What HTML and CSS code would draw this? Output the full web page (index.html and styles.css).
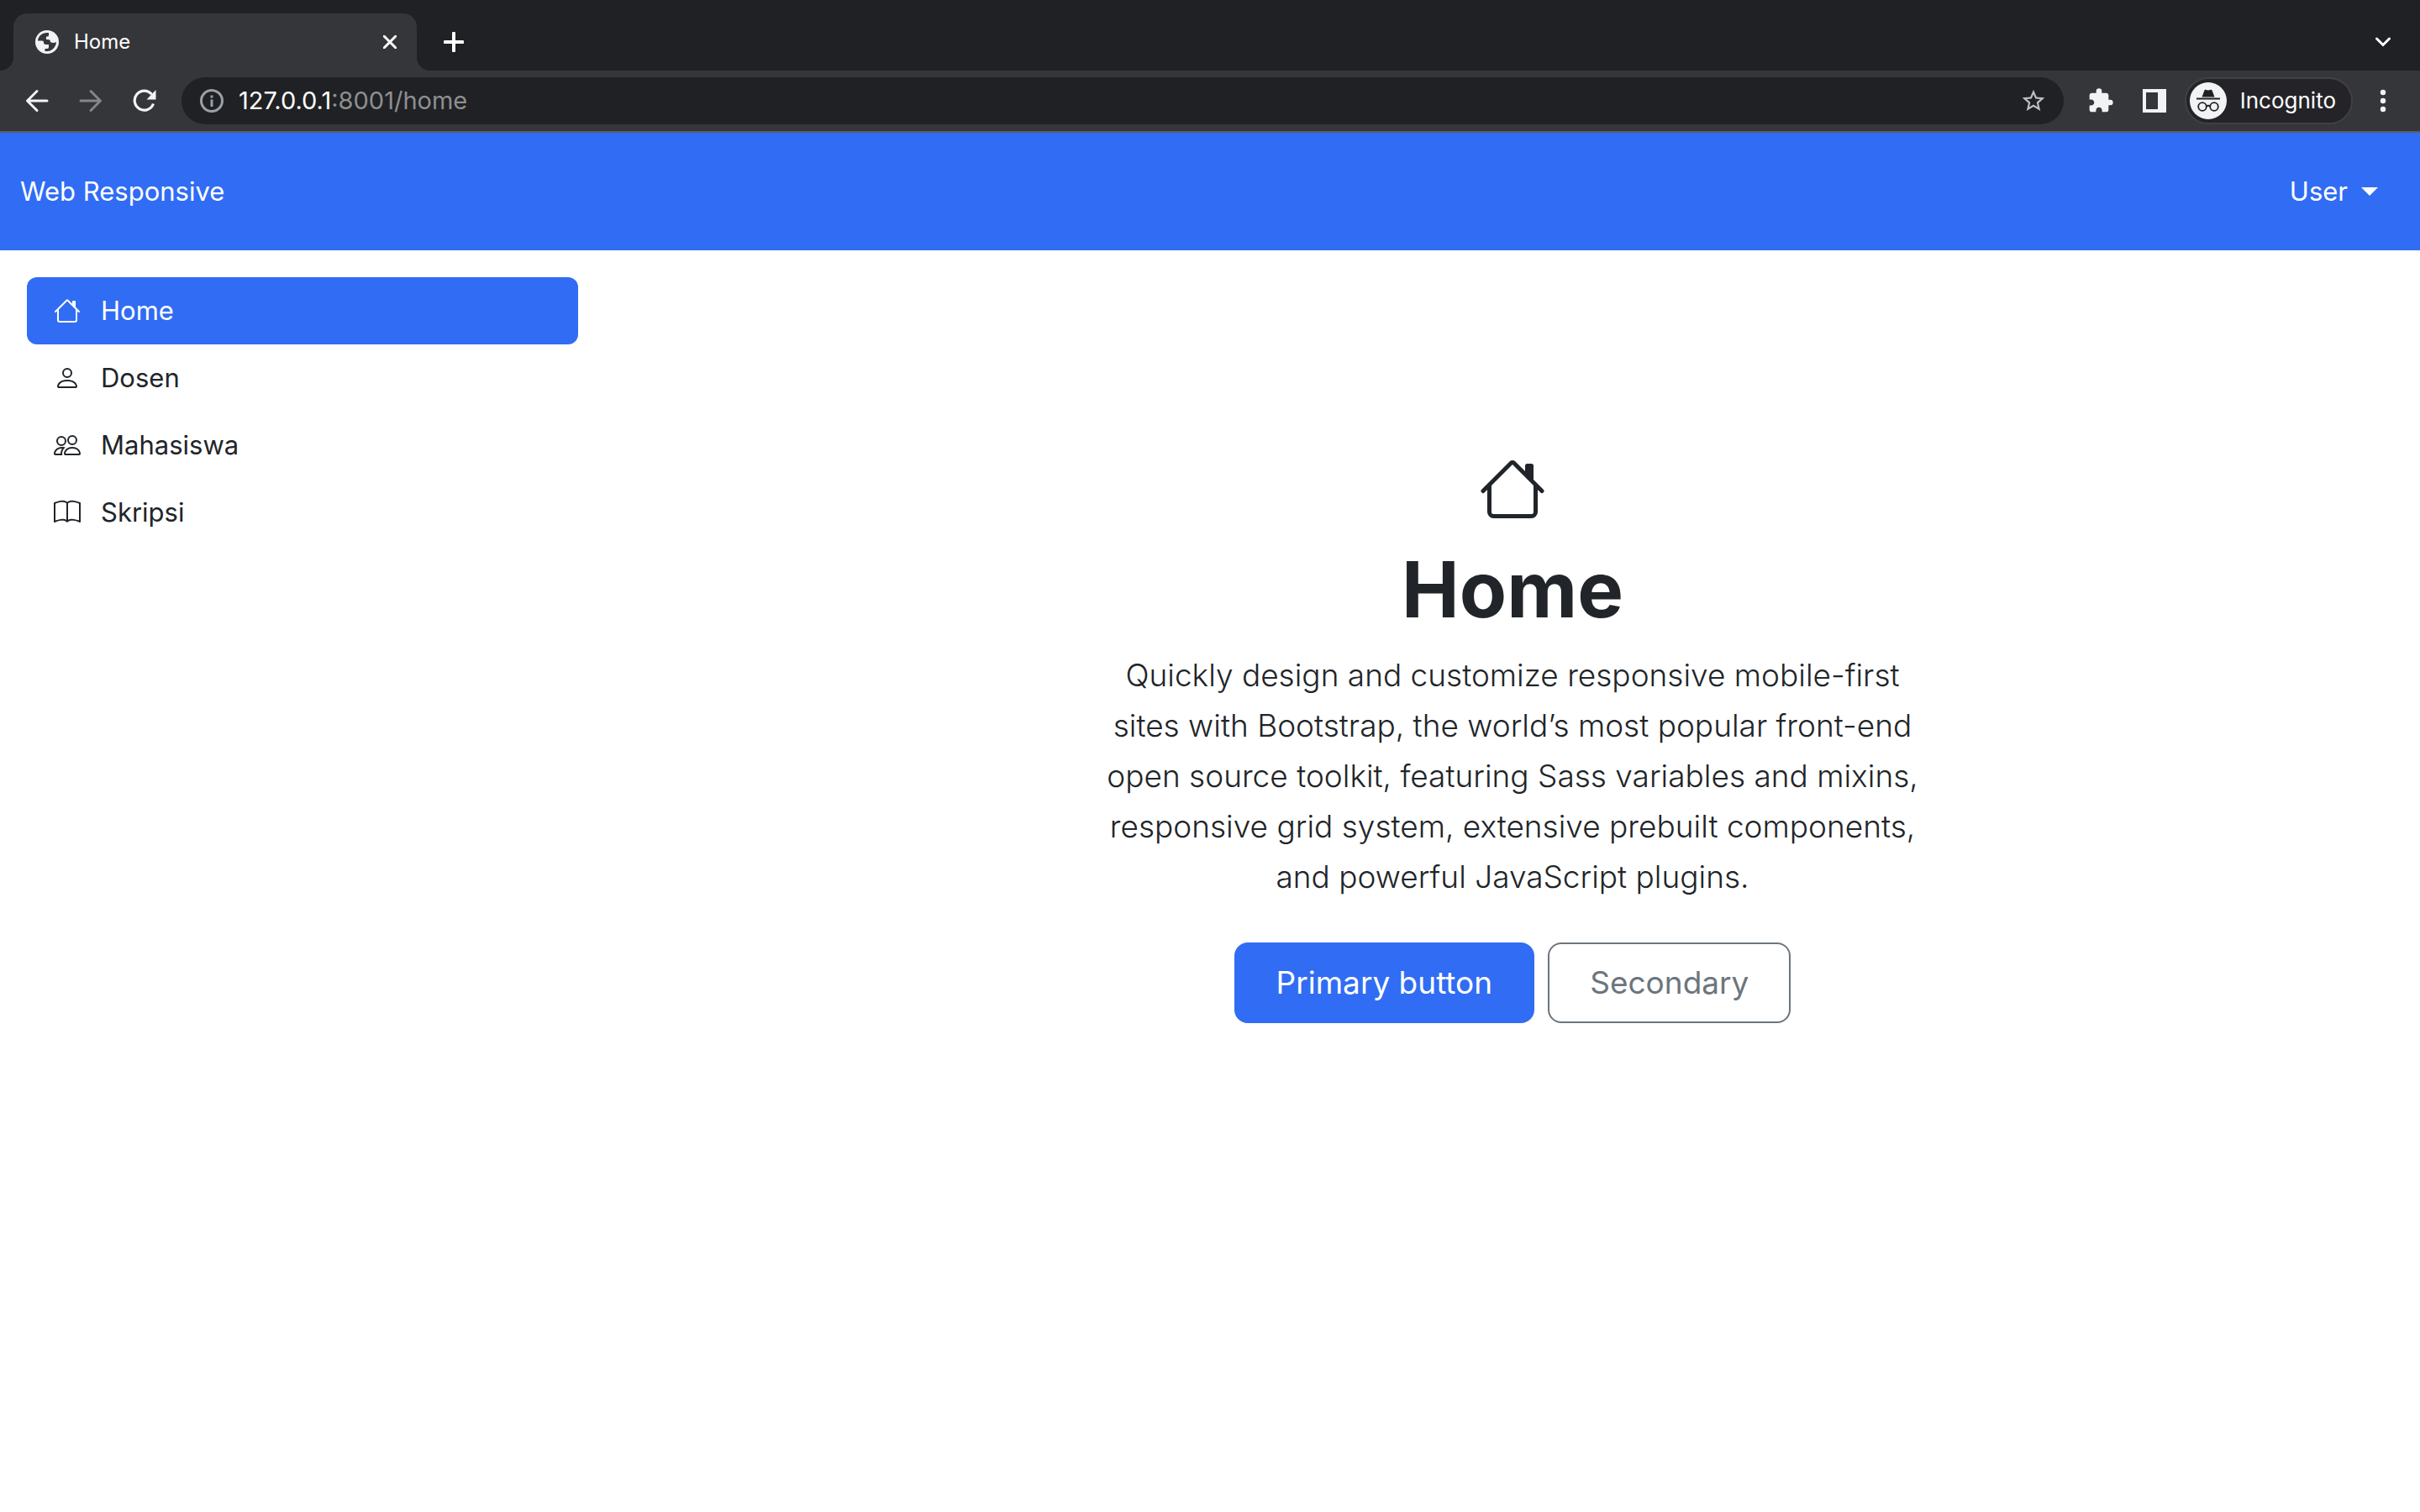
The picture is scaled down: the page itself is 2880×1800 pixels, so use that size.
FILE: index.html
```html
<!DOCTYPE html>
<html lang="id">
<head>
<meta charset="utf-8">
<meta name="viewport" content="width=device-width, initial-scale=1">
<title>Home</title>
<link rel="stylesheet" href="styles.css">
</head>
<body>
<svg class="sprite" aria-hidden="true">
  <symbol id="house" viewBox="0 0 16 16"><path d="M2 13.5V7h1v6.5a.5.5 0 0 0 .5.5h9a.5.5 0 0 0 .5-.5V7h1v6.5a1.5 1.5 0 0 1-1.5 1.5h-9A1.5 1.5 0 0 1 2 13.5zm11-11V6l-2-2V2.5a.5.5 0 0 1 .5-.5h1a.5.5 0 0 1 .5.5z"/><path d="M7.293 1.5a1 1 0 0 1 1.414 0l6.647 6.646a.5.5 0 0 1-.708.708L8 2.207 1.354 8.854a.5.5 0 1 1-.708-.708L7.293 1.5z"/></symbol>
  <symbol id="person" viewBox="0 0 16 16"><path d="M8 8a3 3 0 1 0 0-6 3 3 0 0 0 0 6zm2-3a2 2 0 1 1-4 0 2 2 0 0 1 4 0zm4 8c0 1-1 1-1 1H3s-1 0-1-1 1-4 6-4 6 3 6 4zm-1-.004c-.001-.246-.154-.986-.832-1.664C11.516 10.68 10.289 10 8 10c-2.29 0-3.516.68-4.168 1.332-.678.678-.83 1.418-.832 1.664h10z"/></symbol>
  <symbol id="people" viewBox="0 0 16 16"><path d="M15 14s1 0 1-1-1-4-5-4-5 3-5 4 1 1 1 1h8zm-7.978-1A.261.261 0 0 1 7 12.996c.001-.264.167-1.03.76-1.72C8.312 10.629 9.282 10 11 10c1.717 0 2.687.63 3.24 1.276.593.69.758 1.457.76 1.72l-.008.002a.274.274 0 0 1-.014.002H7.022zM11 7a2 2 0 1 0 0-4 2 2 0 0 0 0 4zm3-2a3 3 0 1 1-6 0 3 3 0 0 1 6 0zM6.936 9.28a5.88 5.88 0 0 0-1.23-.247A7.35 7.35 0 0 0 5 9c-4 0-5 3-5 4 0 .667.333 1 1 1h4.216A2.238 2.238 0 0 1 5 13c0-1.01.377-2.042 1.09-2.904.243-.294.526-.569.846-.816zM4.92 10A5.493 5.493 0 0 0 4 13H1c0-.26.164-1.03.76-1.724.545-.636 1.492-1.256 3.16-1.275zM1.5 5.5a3 3 0 1 1 6 0 3 3 0 0 1-6 0zm3-2a2 2 0 1 0 0 4 2 2 0 0 0 0-4z"/></symbol>
  <symbol id="book" viewBox="0 0 16 16"><path d="M1 2.828c.885-.37 2.154-.769 3.388-.893 1.33-.134 2.458.063 3.112.752v9.746c-.935-.53-2.12-.603-3.213-.493-1.18.12-2.37.461-3.287.811V2.828zm7.5-.141c.654-.689 1.782-.886 3.112-.752 1.234.124 2.503.523 3.388.893v9.923c-.918-.35-2.107-.692-3.287-.81-1.094-.111-2.278-.039-3.213.492V2.687zM8 1.783C7.015.936 5.587.81 4.287.94c-1.514.153-3.042.672-3.994 1.105A.5.5 0 0 0 0 2.5v11a.5.5 0 0 0 .707.455c.882-.4 2.303-.881 3.68-1.02 1.409-.142 2.59.087 3.223.877a.5.5 0 0 0 .78 0c.633-.79 1.814-1.019 3.222-.877 1.378.139 2.8.62 3.681 1.02A.5.5 0 0 0 16 13.5v-11a.5.5 0 0 0-.293-.455c-.952-.433-2.48-.952-3.994-1.105C10.413.809 8.985.936 8 1.783z"/></symbol>
</svg>

<header class="browser">
  <div class="tabstrip">
    <div class="tab">
      <svg class="favicon" viewBox="0 0 28 28"><circle cx="14" cy="14" r="14" fill="#f1f3f4"/><path d="M3 12.500C3.500 7 8 3 14 3h2v3c0 1-1 1.500-2 1.500h-1V11h2c2 0 3 1 3 3 2.500 1.500 5 1 7 0-.3 6-5 11-11 11h-2.500v-3h2.500c1.500 0 2-1 2-2v-3h-3.500c-2 0-2.500-1-2.500-2.500 0-1.200-.5-2-2-2z" fill="#35363a"/></svg>
      <span class="tab-title">Home</span>
      <button class="icon-button tab-close" aria-label="Close tab"><svg viewBox="0 0 16 16"><path d="M1 1l14 14M15 1L1 15" fill="none" stroke="#fff" stroke-width="3" stroke-linecap="round"/></svg></button>
    </div>
    <button class="icon-button new-tab" aria-label="New tab"><svg viewBox="0 0 24 24"><path d="M12 1.500v21M1.500 12h21" fill="none" stroke="#fff" stroke-width="4" stroke-linecap="round"/></svg></button>
    <button class="icon-button tab-search" aria-label="Search tabs"><svg viewBox="0 0 18 12"><path d="M1.500 2L9 9.500 16.500 2" fill="none" stroke="#fff" stroke-width="3" stroke-linecap="round"/></svg></button>
  </div>
  <div class="toolbar">
    <button class="icon-button nav-button" aria-label="Back"><svg viewBox="0 0 28 28"><path d="M26 14H3M14 2.500L2.500 14 14 25.500" fill="none" stroke="#f1f3f4" stroke-width="3" stroke-linecap="round" stroke-linejoin="round"/></svg></button>
    <button class="icon-button nav-button" aria-label="Forward"><svg viewBox="0 0 28 28"><path d="M2 14h23M14 2.500L25.500 14 14 25.500" fill="none" stroke="#85868a" stroke-width="3" stroke-linecap="round" stroke-linejoin="round"/></svg></button>
    <button class="icon-button nav-button" aria-label="Reload"><svg viewBox="0 0 28 28"><path d="M24.500 17.500A11.500 11.500 0 1 1 22.500 6.200" fill="none" stroke="#f1f3f4" stroke-width="3.200"/><path d="M27.500 1v11.500H16.500z" fill="#f1f3f4"/></svg></button>
    <div class="omnibox">
      <svg class="info" viewBox="0 0 28 28"><circle cx="14" cy="14" r="12.500" fill="none" stroke="#9aa0a6" stroke-width="3"/><path d="M12.500 12.500h3V21h-3zM12.500 7.500h3v3h-3z" fill="#9aa0a6"/></svg>
      <p class="url"><span class="url-host">127.0.0.1</span>:8001/home</p>
      <button class="icon-button star" aria-label="Bookmark this tab"><svg viewBox="0 0 24 24"><path d="M22 9.240l-7.190-.62L12 2 9.190 8.630 2 9.240l5.460 4.730L5.820 21 12 17.270 18.180 21l-1.630-7.030L22 9.240zM12 15.400l-3.760 2.270 1-4.280-3.320-2.880 4.380-.38L12 6.100l1.710 4.040 4.380.38-3.320 2.880 1 4.280L12 15.400z" fill="#bdc1c6"/></svg></button>
    </div>
    <div class="actions">
      <button class="icon-button action" aria-label="Extensions"><svg viewBox="0 0 24 24"><path d="M20.500 11H19V7c0-1.100-.9-2-2-2h-4V3.500a2.500 2.500 0 0 0-5 0V5H4c-1.100 0-1.990.9-1.990 2v3.800H3.500c1.490 0 2.700 1.210 2.700 2.700s-1.210 2.700-2.700 2.700H2V20c0 1.100.9 2 2 2h3.800v-1.500c0-1.490 1.210-2.700 2.700-2.700s2.700 1.210 2.700 2.700V22H17c1.100 0 2-.9 2-2v-4h1.500a2.500 2.500 0 0 0 0-5z" fill="#f1f3f4"/></svg></button>
      <button class="icon-button action" aria-label="Side panel"><svg viewBox="0 0 32 32"><path d="M2 2h28v28H2zM6 6v20h14V6z" fill="#f1f3f4" fill-rule="evenodd"/></svg></button>
      <button class="incognito"><svg class="incognito-icon" viewBox="0 0 44 44"><circle cx="22" cy="22" r="22" fill="#f1f3f4"/><path d="M14.500 17.500L17.500 9.500c.4-.9 1.200-.8 2-.5 1.700.6 3.300.6 5 0 .8-.3 1.600-.4 2 .5l3 8z" fill="#202124"/><path d="M8 19.500h28" stroke="#202124" stroke-width="2"/><g fill="none" stroke="#202124" stroke-width="1.800"><circle cx="15" cy="29" r="4.800"/><circle cx="29" cy="29" r="4.800"/><path d="M19.800 28.500q2.200-1.500 4.400 0"/></g></svg><span>Incognito</span></button>
      <button class="icon-button menu" aria-label="Menu"><svg viewBox="0 0 8 28"><g fill="#f1f3f4"><circle cx="4" cy="4" r="3.200"/><circle cx="4" cy="14" r="3.200"/><circle cx="4" cy="24" r="3.200"/></g></svg></button>
    </div>
  </div>
</header>

<nav class="navbar">
  <a class="brand" href="#">Web Responsive</a>
  <button class="user">User<span class="caret"></span></button>
</nav>

<div class="page">
  <aside class="sidebar">
    <ul class="nav">
      <li><a class="nav-link active" href="#"><svg><use href="#house"/></svg>Home</a></li>
      <li><a class="nav-link" href="#"><svg><use href="#person"/></svg>Dosen</a></li>
      <li><a class="nav-link" href="#"><svg><use href="#people"/></svg>Mahasiswa</a></li>
      <li><a class="nav-link" href="#"><svg><use href="#book"/></svg>Skripsi</a></li>
    </ul>
  </aside>
  <main class="hero">
    <svg class="hero-icon" aria-hidden="true"><use href="#house"/></svg>
    <h1>Home</h1>
    <p class="lead">Quickly design and customize responsive mobile-first sites with Bootstrap, the world’s most popular front-end open source toolkit, featuring Sass variables and mixins, responsive grid system, extensive prebuilt components, and powerful JavaScript plugins.</p>
    <div class="buttons">
      <button class="btn btn-primary">Primary button</button>
      <button class="btn btn-secondary">Secondary</button>
    </div>
  </main>
</div>
</body>
</html>
```

FILE: styles.css
```css
*, *::before, *::after { box-sizing: border-box; }

body {
  margin: 0;
  background: #fff;
  color: #212529;
  font-family: Inter, "Liberation Sans", sans-serif;
  font-size: 31px;
  line-height: 48px;
}

button {
  margin: 0;
  padding: 0;
  border: 0;
  background: none;
  color: inherit;
  font: inherit;
}

svg { display: block; fill: currentColor; }
a { color: inherit; text-decoration: none; }
.sprite { display: none; }
.icon-button { flex: none; }
.icon-button svg { width: 100%; }

/* Browser window */
.browser {
  background: #35363a;
  border-bottom: 2px solid #5b5c60;
  color: #fff;
}

.tabstrip {
  display: flex;
  align-items: center;
  height: 84px;
  padding: 16px 35px 0 16px;
  background: #202124;
}

.tab {
  position: relative;
  display: flex;
  align-items: center;
  width: 480px;
  height: 68px;
  padding: 0 24px 0 26px;
  border-radius: 16px 16px 0 0;
  background: #35363a;
}

.tab::before, .tab::after {
  content: "";
  position: absolute;
  bottom: 0;
  width: 16px;
  height: 16px;
}

.tab::before {
  right: 100%;
  background: radial-gradient(circle at 0 0, transparent 16px, #35363a 16px);
}

.tab::after {
  left: 100%;
  background: radial-gradient(circle at 100% 0, transparent 16px, #35363a 16px);
}

.favicon { width: 28px; }
.tab-title { flex: 1; margin-left: 18px; font-size: 24px; line-height: 32px; }
.tab-close { width: 16px; }
.new-tab { width: 24px; margin-left: 32px; }
.tab-search { width: 18px; margin-left: auto; }

.toolbar {
  display: flex;
  align-items: center;
  gap: 36px;
  height: 72px;
  padding: 0 40px 0 30px;
}

.nav-button { width: 28px; }

.omnibox {
  display: flex;
  flex: 1;
  align-items: center;
  height: 56px;
  margin-left: -6px;
  padding: 0 20px 0 22px;
  border-radius: 28px;
  background: #202124;
}

.info { width: 28px; }
.url { flex: 1; margin: 0 0 0 18px; color: #8e8f91; font-size: 29px; line-height: 40px; }
.url-host { color: #fff; }
.star { width: 32px; }

.actions { display: flex; align-items: center; gap: 32px; margin-left: -8px; }
.action { width: 32px; }

.incognito {
  display: flex;
  align-items: center;
  gap: 16px;
  height: 56px;
  margin-left: -12px;
  padding: 0 18px 0 4px;
  border: 2px solid #414045;
  border-radius: 28px;
  background: #242328;
  font-size: 26px;
  line-height: 32px;
}

.incognito-icon { width: 44px; }
.menu { width: 8px; }

/* Page header */
.navbar {
  display: flex;
  align-items: center;
  justify-content: space-between;
  padding: 46px 50px 46px 24px;
  background: #316cf4;
  color: #fff;
}

.user { display: flex; align-items: center; gap: 16px; }

.caret {
  border-top: 10px solid currentColor;
  border-right: 10px solid transparent;
  border-left: 10px solid transparent;
}

/* Page body */
.page { display: grid; grid-template-columns: 1fr 3fr; }
.sidebar { padding: 32px; }
.nav { margin: 0; padding: 0; list-style: none; }

.nav-link {
  display: flex;
  align-items: center;
  gap: 24px;
  padding: 16px 32px;
  border-radius: 12px;
}

.nav-link svg { width: 32px; height: 32px; }
.active { background: #316cf4; color: #fff; }

.hero {
  display: flex;
  flex-direction: column;
  align-items: center;
  padding: 244px 32px 128px;
  text-align: center;
}

.hero-icon { width: 80px; height: 80px; }
h1 { margin: 22px 0 14px; font-size: 92px; font-weight: 700; line-height: 116px; }
.lead { max-width: 980px; margin: 0 0 48px; font-size: 37px; font-weight: 300; line-height: 60px; }
.buttons { display: flex; gap: 16px; }

.btn {
  padding: 16px 48px;
  border: 2px solid;
  border-radius: 16px;
  font-size: 37px;
  line-height: 60px;
}

.btn-primary { border-color: #316cf4; background: #316cf4; color: #fff; }
.btn-secondary { border-color: #6c757d; color: #6c757d; }
```
